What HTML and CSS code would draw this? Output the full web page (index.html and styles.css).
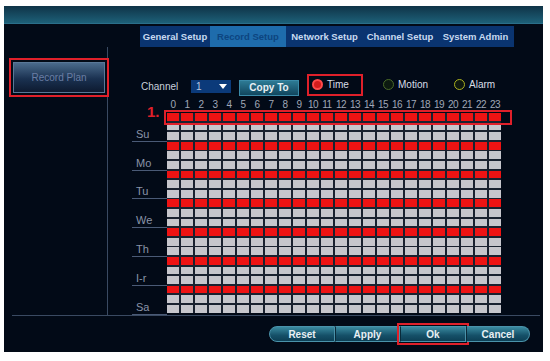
FILE: index.html
```html
<!DOCTYPE html>
<html lang="en">
<head>
    <meta charset="UTF-8">
    <meta name="viewport" content="width=device-width, initial-scale=1.0">
    <title>Record Setup</title>
    <link rel="stylesheet" href="styles.css">
</head>
<body>
    <div class="screen">
        <div class="topbar"></div>

        <div class="tabs">
            <div class="tab t1">General Setup</div>
            <div class="tab t2 active">Record Setup</div>
            <div class="tab t3">Network Setup</div>
            <div class="tab t4">Channel Setup</div>
            <div class="tab t5">System Admin</div>
        </div>

        <div class="main">
            <div class="sidebar">
                <div class="side-button">Record Plan</div>
            </div>

            <div class="content">
                <div class="channel-row">
                    <span class="channel-label">Channel</span>
                    <div class="select">
                        <span>1</span>
                        <span class="arrow"></span>
                    </div>
                    <button class="copy-button">Copy To</button>
                    <div class="radio time">
                        <span class="dot dot-time"></span>Time
                    </div>
                    <div class="radio motion">
                        <span class="dot dot-motion"></span>Motion
                    </div>
                    <div class="radio alarm">
                        <span class="dot dot-alarm"></span>Alarm
                    </div>
                </div>

                <div class="plan">
                    <div class="mark-one">1.</div>
                    <div class="row-box"></div>

                    <div class="hours-spacer"></div>
                    <div class="hours" id="hours"></div>

                    <div class="days">
                        <div class="day">Su</div>
                        <div class="day">Mo</div>
                        <div class="day">Tu</div>
                        <div class="day">We</div>
                        <div class="day">Th</div>
                        <div class="day">I-r</div>
                        <div class="day">Sa</div>
                    </div>
                    <div class="grid" id="grid"></div>
                </div>
            </div>
        </div>

        <div class="footer">
            <div class="button-group">
                <button class="btn first">Reset</button>
                <button class="btn">Apply</button>
                <button class="btn ok">Ok</button>
                <button class="btn last">Cancel</button>
            </div>
        </div>
    </div>

    <script>
        const hours = document.getElementById('hours');
        for (let h = 0; h < 24; h++) {
            const span = document.createElement('span');
            span.textContent = h;
            hours.appendChild(span);
        }

        const grid = document.getElementById('grid');
        for (let r = 0; r < 21; r++) {
            for (let c = 0; c < 24; c++) {
                const cell = document.createElement('div');
                cell.className = r % 3 === 0 ? 'cell on' : 'cell';
                grid.appendChild(cell);
            }
        }
    </script>
</body>
</html>
```

FILE: styles.css
```css
body {
    margin: 0;
    background-color: #ffffff;
    font-family: 'Liberation Sans', Arial, sans-serif;
}

.screen {
    width: 539px;
    height: 346px;
    margin: 6px 0 0 4px;
    background-color: #020a17;
    display: flex;
    flex-direction: column;
}

.topbar {
    height: 18px;
    background: linear-gradient(#0f3347, #1d6078);
    border-bottom: 1px solid #2a6f8a;
    box-sizing: border-box;
}

.tabs {
    display: flex;
    height: 21px;
    margin: 2px 0 0 136px;
}

.tab {
    background-color: #0a3470;
    color: #c8daf0;
    font-size: 9.5px;
    font-weight: bold;
    display: flex;
    align-items: center;
    justify-content: center;
}

.tab.active {
    background-color: #1e6cac;
    color: #0d4580;
}

.t1 { width: 70px; }
.t2 { width: 76px; }
.t3 { width: 77px; }
.t4 { width: 74px; }
.t5 { width: 77px; }

.main {
    display: flex;
    height: 269px;
    margin: 0 3px 0 8px;
    border-bottom: 1px solid #3a4a62;
    box-sizing: border-box;
}

.sidebar {
    width: 96px;
    padding: 15px 0 0 1px;
    border-right: 1px solid #3a4a62;
    box-sizing: border-box;
}

.side-button {
    width: 92px;
    height: 31px;
    background: linear-gradient(#4a6a8c, #1a3150 55%, #0d1a30);
    border: 1px solid #5a7898;
    box-sizing: border-box;
    color: #6a7ea4;
    font-size: 10px;
    display: flex;
    align-items: center;
    justify-content: center;
    outline: 2px solid #e0202a;
    outline-offset: 2px;
}

.content {
    flex: 1;
    padding: 31px 0 0 24px;
}

.channel-row {
    display: flex;
    align-items: center;
    height: 16px;
    margin-left: 9px;
    color: #c8d0dc;
    font-size: 10px;
}

.channel-label {
    width: 50px;
}

.select {
    width: 40px;
    height: 13px;
    background-color: #0b3a7a;
    display: flex;
    align-items: center;
    justify-content: space-between;
    padding: 0 4px 0 5px;
    box-sizing: border-box;
    margin-right: 8px;
    color: #b8c8e0;
}

.arrow {
    width: 0;
    height: 0;
    border-left: 4px solid transparent;
    border-right: 4px solid transparent;
    border-top: 5px solid #ffffff;
}

.copy-button {
    width: 60px;
    height: 16px;
    margin: 3px 12px 0 0;
    padding: 0;
    background: linear-gradient(#2d7a94, #11465e);
    border: 1px solid #3a8aa8;
    color: #e8f0f4;
    font-family: inherit;
    font-size: 10px;
    font-weight: bold;
}

.radio {
    display: flex;
    align-items: center;
    gap: 4px;
    color: #d8dee8;
}

.time {
    width: 47px;
    outline: 2px solid #e0202a;
    outline-offset: 2px;
    height: 14px;
    margin-top: -3px;
    padding-left: 1px;
    margin-right: 24px;
}

.motion {
    width: 71px;
    margin-top: -3px;
}

.alarm {
    margin-top: -3px;
}

.dot {
    width: 11px;
    height: 11px;
    border-radius: 50%;
    box-sizing: border-box;
}

.dot-time {
    background-color: #d41d1d;
    border: 2px solid #ff4a4a;
}

.dot-motion {
    border: 1px solid #4a6a28;
    background-color: #0c1a10;
}

.dot-alarm {
    border: 1px solid #aab020;
    background-color: #0e1810;
}

.plan {
    position: relative;
    display: grid;
    grid-template-columns: 35px 334px;
    margin-top: 6px;
}

.hours {
    display: grid;
    grid-template-columns: repeat(24, 12px);
    column-gap: 2px;
    height: 10px;
    margin-bottom: 3px;
    color: #a0a8b8;
    font-size: 10px;
    line-height: 10px;
}

.hours span {
    text-align: center;
    letter-spacing: -0.5px;
}

.days {
    display: flex;
    flex-direction: column;
}

.day {
    height: 28.8px;
    border-bottom: 1px solid #4a5a76;
    box-sizing: border-box;
    display: flex;
    align-items: flex-end;
    padding: 0 0 1px 4px;
    color: #8a94a8;
    font-size: 11px;
}

.grid {
    display: grid;
    grid-template-columns: repeat(24, 12px);
    grid-template-rows: repeat(21, 7.8px);
    gap: 1.8px 2px;
    background-color: #1a2230;
    align-self: start;
}

.cell {
    background-color: #c6c6cc;
}

.cell.on {
    background-color: #ee1313;
}

.mark-one {
    position: absolute;
    left: 15px;
    top: 3px;
    color: #e0202a;
    font-size: 15px;
    font-weight: bold;
}

.row-box {
    position: absolute;
    left: 32px;
    top: 10px;
    width: 344px;
    height: 11px;
    border: 2px solid #e0202a;
}

.footer {
    display: flex;
    justify-content: flex-end;
    padding: 10px 13px 0 0;
}

.button-group {
    display: flex;
}

.btn {
    width: 65px;
    height: 16px;
    padding: 0;
    background: linear-gradient(#3a8aa0, #155068 60%, #0d3f55);
    border: 1px solid #4a92aa;
    border-left-color: #0a2a3a;
    color: #e8f0f4;
    font-family: inherit;
    font-size: 10px;
    font-weight: bold;
}

.btn.first {
    width: 66px;
    border-radius: 9px 0 0 9px;
    border-left-color: #4a92aa;
}

.btn.last {
    width: 64px;
    border-radius: 0 9px 9px 0;
}

.btn.ok {
    width: 66px;
    outline: 2px solid #e0202a;
    outline-offset: 1px;
}
```
